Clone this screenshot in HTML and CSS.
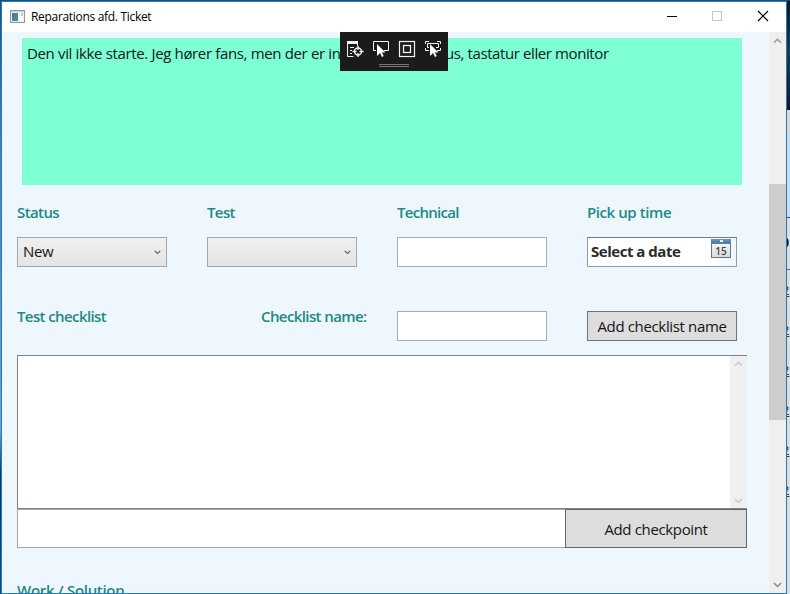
FILE: index.html
```
<!DOCTYPE html>
<html lang="da">
<head>
<meta charset="utf-8">
<title>Reparations afd. Ticket</title>
<link rel="stylesheet" href="styles.css">
</head>
<body>
<div class="desktop">
  <div class="window">
    <header class="titlebar">
      <svg class="app-icon" width="15" height="13" viewBox="0 0 15 13"><rect x=".5" y=".5" width="14" height="12" fill="#e9edf0" stroke="#8e979c"/><path d="M1 1.5h13" stroke="#c8d0d5"/><rect x="2" y="3" width="6" height="8" fill="#4a8a91"/><rect x="2" y="3" width="3" height="4" fill="#45799f"/><rect x="9" y="3" width="4" height="8" fill="#f9fafa"/><path d="M11 3h2v3h-2z" fill="#b9cbd6"/></svg>
      <span class="title">Reparations afd. Ticket</span>
      <svg class="controls" width="120" height="30" viewBox="0 0 120 30" fill="none"><path d="M11 14.5h10" stroke="#000"/><rect x="56.500" y="9.500" width="9" height="9" stroke="#c5c5c5"/><path d="M102 9l10 10m0-10l-10 10" stroke="#000" stroke-width="1.2"/></svg>
    </header>
    <div class="viewport">
      <main class="content">
        <div class="message"><span class="msg-a">Den vil ikke starte. Jeg hører fans, men der er in</span><span class="msg-b">us, tastatur eller monitor</span></div>
        <section class="fields">
          <label class="l-status">Status</label><label class="l-test">Test</label><label class="l-tech">Technical</label><label class="l-pick">Pick up time</label>
          <div class="combo"><span class="new">New</span><svg width="7" height="5" viewBox="0 0 7 5"><path d="M.7 .8l2.800 2.700L6.300 .8" fill="none" stroke="#606060" stroke-width="1.100"/></svg></div>
          <div class="combo"><span></span><svg width="7" height="5" viewBox="0 0 7 5"><path d="M.7 .8l2.800 2.700L6.300 .8" fill="none" stroke="#606060" stroke-width="1.100"/></svg></div>
          <div class="input"></div>
          <div class="date"><span class="date-text">Select a date</span><svg width="20" height="19" viewBox="0 0 20 19"><defs><linearGradient id="page" x2="0" y2="1"><stop stop-color="#fff"/><stop offset="1" stop-color="#d5dadd"/></linearGradient></defs><rect x=".5" y=".5" width="19" height="18" fill="url(#page)" stroke="#69777f"/><path d="M0 0h20v5H0z" fill="#587fa9"/><path d="M0 1h20" stroke="#809fbe"/><path d="M9 1h3v2H9z" fill="#e9f3ff"/><text class="day" x="10" y="15.500" text-anchor="middle">15</text></svg></div>
        </section>
        <section class="checklist-head">
          <label class="l-list">Test checklist</label>
          <label class="l-name">Checklist name:</label>
          <div class="input"></div>
          <div class="button"><span class="b-name">Add checklist name</span></div>
        </section>
        <section class="list"><div class="list-body"></div>
          <div class="list-scroll"><svg width="9" height="6" viewBox="0 0 9 6"><path d="M1 4.800l3.500-3.500L8 4.800" fill="none" stroke="#c9c9c9" stroke-width="1.500"/></svg><svg width="9" height="6" viewBox="0 0 9 6"><path d="M1 1l3.500 3.500L8 1" fill="none" stroke="#c9c9c9" stroke-width="1.500"/></svg></div>
        </section>
        <section class="add-row"><div class="entry"></div><div class="button"><span class="b-point">Add checkpoint</span></div></section>
        <label class="l-work">Work / Solution</label>
      </main>
      <aside class="scrollbar"><svg width="9" height="6" viewBox="0 0 9 6"><path d="M1 4.800l3.500-3.500L8 4.800" fill="none" stroke="#999" stroke-width="1.500"/></svg><div class="thumb"></div><svg class="down" width="9" height="6" viewBox="0 0 9 6"><path d="M1 1l3.500 3.500L8 1" fill="none" stroke="#888" stroke-width="1.500"/></svg></aside>
    </div>
  </div>
  <div class="behind">
    <div class="dark"></div>
    <div class="pane"></div>
    <div class="cell head">D</div>
    <div class="cell">2</div><div class="cell">2</div><div class="cell">2</div><div class="cell">2</div><div class="cell">2</div><div class="cell">2</div>
  </div>
  <div class="debugbar">
    <svg width="108" height="39" viewBox="0 0 108 39" fill="none" stroke="#f2f2f2">
      <path d="M7 10.500h11" stroke-width="3"/><path d="M7.500 12v12.500h6M17.500 12v2M10 15.500h4M10 18.500h2M10 21.500h2"/><circle cx="18" cy="19.500" r="3.500" stroke-width="1.400"/><path d="M18 14v4m0 3v4m-5.500-5.500h4m3 0h4" stroke-width="1.300"/>
      <path d="M36 18.500h-2.500v-9h15v9H44"/><path d="M37 12v12l3-3 2 4 1.800-1-2-3.500h3.700z" fill="#fff" stroke="none"/>
      <rect x="59.500" y="9.500" width="15" height="15" stroke-width="1.200"/><rect x="63.500" y="13.500" width="7" height="7" stroke-width="1.300"/>
      <path d="M85.500 12V9.500H89M97 9.500h3.500V12M85.500 16v2.500H89M97 18.500h3.500V16M89 15.500h-1.500v-4h11v4H96"/><path d="M90 12v12l3-3 2 4 1.800-1-2-3.500h3.700z" fill="#fff" stroke="none"/>
      <path d="M39 32.500h30M39 34.500h30" stroke="#777"/>
    </svg>
  </div>
</div>
</body>
</html>
```
FILE: styles.css
```
* { box-sizing: border-box; }
body { margin: 0; width: 790px; height: 594px; overflow: hidden; font: 15px/20px "Open Sans", "Noto Sans", sans-serif; color: #151515; }
svg { display: block; flex: none; }
.desktop { position: relative; display: flex; width: 790px; height: 594px; padding: 1px 0 0 1px; background: linear-gradient(#174f83, #3f7cb6 20%, #5595cc 50%, #6ba5d7 72%, #07346c 80%, #124d84); }
.window { width: 786px; height: 593px; flex: none; border: 1px solid #2879b5; background: #fff; }
.titlebar { display: flex; height: 30px; align-items: center; padding-left: 8px; }
.app-icon { margin-top: -2px; }
.title { margin-left: 6px; flex: 1; font-size: 12px; white-space: nowrap; color: #000; letter-spacing: -.31px; }
.controls { margin-right: 10px; }
.viewport { display: flex; height: 561px; background: #eef7fe; }
.content { width: 767px; padding: 6px 22px 0 15px; overflow: hidden; }
.content span, .content label { white-space: nowrap; }
.message { display: flex; width: 720px; height: 147px; margin-left: 5px; padding: 5px 0 0 5px; background: #7fffd4; color: #0c211a; }
.msg-a { width: 418px; letter-spacing: -.35px; }
.msg-b { letter-spacing: -.4px; }
.fields { display: grid; grid-template-columns: repeat(4, 150px); column-gap: 40px; grid-template-rows: 34px 30px; margin-top: 18px; }
label { font-weight: 600; color: #218985; letter-spacing: -.6px; }
.fields label { margin-top: -1px; }
.fields .l-tech { letter-spacing: -.7px; }
.fields .l-pick { letter-spacing: -.42px; }
.combo { display: flex; align-items: center; justify-content: space-between; padding: 0 5px 0 5px; border: 1px solid #a1a8ae; background: linear-gradient(#f0f0f0, #e4e4e4); }
.combo span { margin-top: -3px; letter-spacing: -.3px; }
.input { height: 30px; border: 1px solid #a4adb5; background: #fff; }
.date { display: flex; justify-content: space-between; padding: 2px 5px 0 3px; border: 1px solid #8a9eb0; border-top-color: #6d7f90; background: linear-gradient(to right, #fff 80%, #f0f7fd); }
.date-text { margin-top: 1px; font-weight: 700; letter-spacing: -.48px; color: #2b2b2b; }
.date svg { margin-top: -1px; }
.day { font: 600 10px "Open Sans", sans-serif; fill: #444; }
.checklist-head { display: grid; grid-template-columns: 244px 136px 150px 150px; margin-top: 44px; height: 44px; align-items: start; }
.checklist-head label { margin-top: -5px; }
.checklist-head .button { margin-left: 40px; width: 150px; height: 30px; }
.button { display: flex; align-items: center; justify-content: center; border: 1px solid #70757a; background: #ddd; letter-spacing: -.35px; }
.list { display: flex; width: 730px; height: 154px; border: 1px solid #7c8488; border-right: 0; background: #fff; }
.list-body { flex: 1; }
.list-scroll { display: flex; flex-direction: column; justify-content: space-between; align-items: center; width: 17px; padding: 5px 0 4px; background: #f0f0f0; }
.add-row { display: flex; width: 730px; height: 39px; }
.entry { width: 548px; background: #fff; border: 1px solid #a6a6a6; border-right: 0; }
.add-row .button { width: 182px; border-color: #666; }
.l-work { display: block; margin-top: 32px; letter-spacing: -.3px; }
.scrollbar { display: flex; flex-direction: column; align-items: center; width: 17px; background: #efefef; padding-top: 6px; }
.thumb { width: 17px; height: 236px; margin-top: 140px; background: #cdcdcd; }
.down { margin-top: 162px; }
.behind { width: 3px; overflow: hidden; background: #dadde1; }
.dark { height: 109px; background: linear-gradient(#07192d, #163c51 45%, #10182b); }
.pane { height: 108px; background: linear-gradient(#d8d8d8 20px, #c8ddef 21px); border-bottom: 1px solid #174e9a; }
.cell { height: 40px; text-indent: -5px; padding-top: 12px; font-size: 13px; line-height: 16px; text-decoration: underline; color: #263b50; }
.cell.head { height: 52px; padding-top: 17px; border-bottom: 1px solid #4769ba; font-size: 17px; font-weight: 700; text-indent: -10px; text-decoration: none; color: #111; }
.debugbar { position: absolute; left: 340px; top: 32px; width: 108px; height: 39px; background: #1b1b1c; }
```
